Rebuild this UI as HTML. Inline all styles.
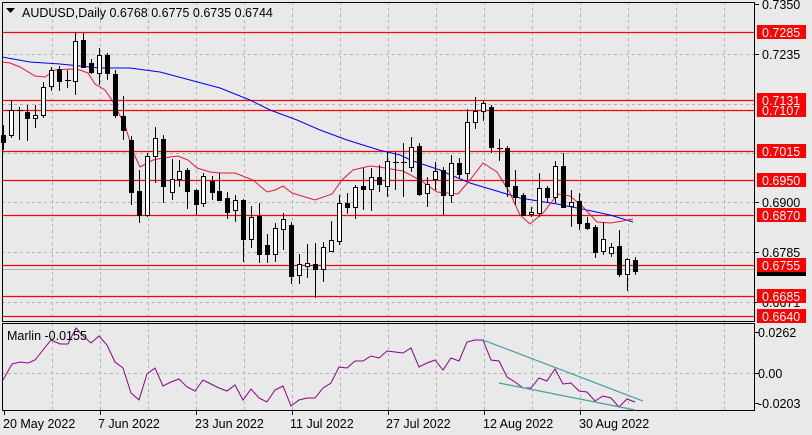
<!DOCTYPE html>
<html><head><meta charset="utf-8"><style>
html,body{margin:0;padding:0;background:#e9e9e9;}
svg{display:block;font-family:"Liberation Sans",sans-serif;}
</style></head><body>
<svg width="812" height="435" viewBox="0 0 812 435" xmlns="http://www.w3.org/2000/svg">
<rect width="812" height="435" fill="#e9e9e9"/>
<!-- grid -->
<g stroke="#b4b4b4" stroke-dasharray="3,3" stroke-width="1">
<path d="M52.5 2V321M100.5 2V321M148.5 2V321M196.5 2V321M244.5 2V321M292.5 2V321M340.5 2V321M388.5 2V321M436.5 2V321M484.5 2V321M532.5 2V321M580.5 2V321M628.5 2V321M676.5 2V321M724.5 2V321"/>
<path d="M52.5 323V411M100.5 323V411M148.5 323V411M196.5 323V411M244.5 323V411M292.5 323V411M340.5 323V411M388.5 323V411M436.5 323V411M484.5 323V411M532.5 323V411M580.5 323V411M628.5 323V411M676.5 323V411M724.5 323V411"/>
<path d="M2 54.5H755M2 104.5H755M2 153.5H755M2 202.5H755M2 252.5H755M2 302.5H755M2 373.5H755"/>
</g>
<!-- current price gray line -->
<path d="M2 269.5H755" stroke="#b0b0b0"/>
<!-- red levels -->
<g stroke="#ff0000" stroke-width="1.3">
<path d="M2 32.5H755M2 100.5H755M2 110.5H755M2 151.5H755M2 180.5H755M2 215.5H755M2 265.5H755M2 296.5H755M2 316.5H755"/>
</g>
<!-- MAs -->
<polyline fill="none" stroke="#0000ff" stroke-width="1" points="2,57 30,62 60,64 100,68 130,68 160,72 190,80 220,88 250,100 270,110 297,120 320,130 347,140 379,150 400,155 413,161 440,170 453,176 470,183 520,198 557,204 587,210 610,215 633,222"/>
<polyline fill="none" stroke="#e8173c" stroke-width="1" points="2,62 10,63 20,67 35,76 45,77 55,70 70,69 80,70 88,73 95,84 105,90 112,100 117,110 125,125 133,152 140,167 153,160 163,158 178,156 188,160 197,168 210,172 220,173 235,173 253,180 267,192 275,190 283,186 292,193 315,200 332,194 342,180 353,170 370,166 379,167 403,171 420,180 437,192 458,194 470,180 483,163 497,172 510,193 520,215 530,224 543,213 558,194 570,196 583,207 597,222 610,223 623,221 633,219"/>
<!-- candles -->
<g id="c" stroke="#000" stroke-width="1" shape-rendering="crispEdges"></g>
<!-- frames -->
<rect x="2.5" y="2.5" width="752" height="319" fill="none" stroke="#000"/>
<rect x="2.5" y="323.5" width="752" height="87" fill="none" stroke="#000"/>
<!-- indicator -->
<polyline fill="none" stroke="#8b008b" stroke-width="1" points="3,380 12,364 20,362 28,363 35,360 43,350 51,340 60,344 68,344 76,328 83,336 91,343 99,336 107,345 115,362 123,368 131,393 139,400 147,374 155,368 163,386 171,382 179,379 187,387 195,391 203,380 211,384 219,388 227,391 235,385 243,400 251,389 259,398 267,402 275,390 283,386 291,406 299,400 307,398 315,398 323,388 331,383 339,367 347,368 355,361 363,361 371,356 379,358 387,351 395,352 403,353 411,348 419,367 427,363 435,360 443,370 451,358 459,361 467,342 475,340 483,340 491,360 499,361 507,377 515,382 523,388 531,388 539,378 547,381 555,369 563,384 571,383 579,391 587,392 595,401 603,396 611,398 619,407 627,399 635,402"/>
<path d="M483 340L643 401M499 383L635 410" stroke="#40a0a0" stroke-width="1.2" fill="none"/>
<!-- header -->
<path d="M6 8h9l-4.5 5z" fill="#000"/>
<text x="22" y="17" font-size="12.5" fill="#000">AUDUSD,Daily  0.6768 0.6775 0.6735 0.6744</text>
<text x="7" y="340" font-size="12.5" fill="#000">Marlin -0.0155</text>
<!-- price axis -->
<g font-size="12.5" fill="#000">
<text x="762" y="9">0.7350</text>
<text x="762" y="59">0.7235</text>
<text x="762" y="207">0.6900</text>
<text x="762" y="257">0.6785</text>
<text x="762" y="307">0.6671</text>
<text x="758" y="337">0.0262</text>
<text x="758" y="378">0.00</text>
<text x="758" y="408">-0.0203</text>
</g>
<path d="M755 4.5h4M755 54.5h4M755 202.5h4M755 252.5h4M755 302.5h4M755 332.5h4M755 373.5h4M755 403.5h4" stroke="#000"/>
<rect x="757" y="268" width="49" height="8" fill="#000"/>
<g fill="#ff0000">
<rect x="757" y="25" width="49" height="14"/>
<rect x="757" y="103" width="49" height="14"/>
<rect x="757" y="93" width="49" height="14"/>
<rect x="757" y="144" width="49" height="14"/>
<rect x="757" y="173" width="49" height="14"/>
<rect x="757" y="208" width="49" height="14"/>
<rect x="757" y="258" width="49" height="14"/>
<rect x="757" y="289" width="49" height="14"/>
<rect x="757" y="309" width="49" height="14"/>
</g>
<g font-size="12.5" fill="#fff">
<text x="762" y="37">0.7285</text>
<text x="762" y="115">0.7107</text>
<rect x="757" y="93" width="49" height="13" fill="#ff0000"/>
<text x="762" y="105">0.7131</text>
<text x="762" y="156">0.7015</text>
<text x="762" y="185">0.6950</text>
<text x="762" y="220">0.6870</text>
<text x="762" y="270">0.6755</text>
<text x="762" y="301">0.6685</text>
<text x="762" y="321">0.6640</text>
</g>
<!-- time axis -->
<path d="M4.5 411v4M100.5 411v4M196.5 411v4M292.5 411v4M388.5 411v4M484.5 411v4M580.5 411v4" stroke="#000"/>
<g font-size="12.5" fill="#000">
<text x="3" y="428">20 May 2022</text>
<text x="98" y="428">7 Jun 2022</text>
<text x="195" y="428">23 Jun 2022</text>
<text x="290" y="428">11 Jul 2022</text>
<text x="386" y="428">27 Jul 2022</text>
<text x="483" y="428">12 Aug 2022</text>
<text x="579" y="428">30 Aug 2022</text>
</g>
<g stroke="#000" stroke-width="1" shape-rendering="crispEdges">
<path d="M3.5 125V150M11.5 100V138M19.5 107V140M27.5 105V141M35.5 105V128M43.5 82V118M51.5 67V91M59.5 66V91M67.5 70V88M75.5 32V95M83.5 33V68M91.5 59V74M99.5 48V85M107.5 53V80M115.5 70V118M123.5 96V140M131.5 136V205M139.5 170V223M147.5 153V217M155.5 127V183M163.5 135V203M172.5 159V200M179.5 160V187M187.5 168V209M196.5 189V215M203.5 173V207M212.5 176V200M219.5 173V200M227.5 192V219M235.5 195V222M243.5 199V262M251.5 206V248M259.5 203V263M267.5 234V263M275.5 223V262M283.5 213V250M291.5 222V284M299.5 254V284M307.5 244V278M315.5 243V298M323.5 242V282M331.5 221V252M339.5 195V245M347.5 193V214M355.5 185V219M363.5 168V210M371.5 168V211M379.5 165V192M387.5 152V197M395.5 152V190M403.5 143V197M411.5 137V172M419.5 143V196M427.5 177V207M435.5 162V190M443.5 167V215M451.5 155V203M459.5 158V178M467.5 109V180M475.5 97V129M483.5 100V121M491.5 105V153M499.5 139V161M507.5 146V197M515.5 170V205M523.5 193V216M531.5 207V217M539.5 173V217M547.5 186V203M555.5 161V203M563.5 153V207M571.5 190V227M579.5 193V230M587.5 217V230M595.5 225V258M603.5 222V255M611.5 243V257M619.5 230V277M627.5 258V291M635.5 257V275"/>
<g fill="#000">
<rect x="1.5" y="135.5" width="4" height="7"/>
<rect x="25.5" y="112.5" width="4" height="6"/>
<rect x="57.5" y="69.5" width="4" height="12"/>
<rect x="81.5" y="40.5" width="4" height="27"/>
<rect x="89.5" y="63.5" width="4" height="9"/>
<rect x="105.5" y="55.5" width="4" height="18"/>
<rect x="113.5" y="74.5" width="4" height="41"/>
<rect x="121.5" y="116.5" width="4" height="14"/>
<rect x="129.5" y="140.5" width="4" height="52"/>
<rect x="137.5" y="191.5" width="4" height="24"/>
<rect x="161.5" y="139.5" width="4" height="47"/>
<rect x="185.5" y="170.5" width="4" height="21"/>
<rect x="194.5" y="190.5" width="4" height="14"/>
<rect x="210.5" y="181.5" width="4" height="11"/>
<rect x="217.5" y="191.5" width="4" height="9"/>
<rect x="225.5" y="198.5" width="4" height="14"/>
<rect x="241.5" y="200.5" width="4" height="39"/>
<rect x="257.5" y="216.5" width="4" height="38"/>
<rect x="265.5" y="245.5" width="4" height="9"/>
<rect x="289.5" y="225.5" width="4" height="51"/>
<rect x="313.5" y="264.5" width="4" height="5"/>
<rect x="345.5" y="203.5" width="4" height="4"/>
<rect x="361.5" y="186.5" width="4" height="3"/>
<rect x="377.5" y="177.5" width="4" height="7"/>
<rect x="417.5" y="146.5" width="4" height="48"/>
<rect x="441.5" y="170.5" width="4" height="25"/>
<rect x="457.5" y="163.5" width="4" height="11"/>
<rect x="489.5" y="107.5" width="4" height="40"/>
<rect x="505.5" y="148.5" width="4" height="38"/>
<rect x="513.5" y="186.5" width="4" height="11"/>
<rect x="521.5" y="195.5" width="4" height="20"/>
<rect x="545.5" y="188.5" width="4" height="9"/>
<rect x="561.5" y="166.5" width="4" height="41"/>
<rect x="577.5" y="201.5" width="4" height="22"/>
<rect x="585.5" y="223.5" width="4" height="5"/>
<rect x="593.5" y="227.5" width="4" height="25"/>
<rect x="617.5" y="246.5" width="4" height="28"/>
<rect x="633.5" y="260.5" width="4" height="11"/>
</g>
<g fill="#fff">
<rect x="9.5" y="110.5" width="4" height="25"/>
<rect x="33.5" y="115.5" width="4" height="3"/>
<rect x="41.5" y="87.5" width="4" height="28"/>
<rect x="49.5" y="70.5" width="4" height="16"/>
<rect x="73.5" y="41.5" width="4" height="40"/>
<rect x="97.5" y="55.5" width="4" height="18"/>
<rect x="145.5" y="156.5" width="4" height="59"/>
<rect x="153.5" y="138.5" width="4" height="18"/>
<rect x="170.5" y="179.5" width="4" height="13"/>
<rect x="177.5" y="171.5" width="4" height="8"/>
<rect x="201.5" y="176.5" width="4" height="27"/>
<rect x="233.5" y="200.5" width="4" height="10"/>
<rect x="249.5" y="217.5" width="4" height="22"/>
<rect x="273.5" y="228.5" width="4" height="26"/>
<rect x="281.5" y="219.5" width="4" height="10"/>
<rect x="297.5" y="264.5" width="4" height="11"/>
<rect x="305.5" y="263.5" width="4" height="3"/>
<rect x="321.5" y="247.5" width="4" height="22"/>
<rect x="329.5" y="240.5" width="4" height="11"/>
<rect x="337.5" y="203.5" width="4" height="38"/>
<rect x="353.5" y="187.5" width="4" height="20"/>
<rect x="369.5" y="177.5" width="4" height="12"/>
<rect x="385.5" y="161.5" width="4" height="25"/>
<rect x="409.5" y="147.5" width="4" height="20"/>
<rect x="425.5" y="184.5" width="4" height="9"/>
<rect x="433.5" y="171.5" width="4" height="8"/>
<rect x="449.5" y="163.5" width="4" height="32"/>
<rect x="465.5" y="122.5" width="4" height="51"/>
<rect x="473.5" y="111.5" width="4" height="11"/>
<rect x="481.5" y="103.5" width="4" height="8"/>
<rect x="529.5" y="212.5" width="4" height="2"/>
<rect x="537.5" y="188.5" width="4" height="25"/>
<rect x="553.5" y="166.5" width="4" height="31"/>
<rect x="569.5" y="202.5" width="4" height="4"/>
<rect x="601.5" y="239.5" width="4" height="12"/>
<rect x="609.5" y="247.5" width="4" height="6"/>
<rect x="625.5" y="259.5" width="4" height="15"/>
</g>
<path d="M17 110.5h6M65 80.5h6M393 162.5h6M401 162.5h6M497 148.5h6"/>
</g>
</svg>
</body></html>
